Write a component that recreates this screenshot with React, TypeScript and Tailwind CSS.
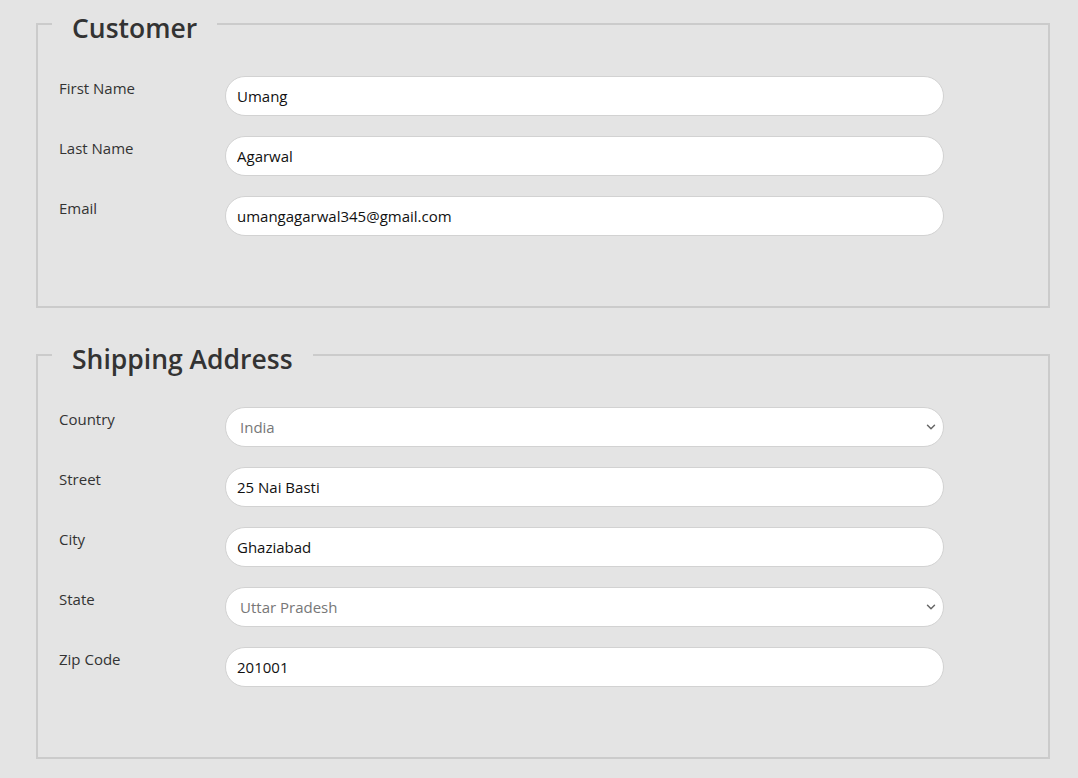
import React from 'react';
import { ChevronDown } from 'lucide-react';

interface FieldProps {
  label: string;
  value: string;
  select?: boolean;
}

const Field: React.FC<FieldProps> = ({ label, value, select }) => {
  return (
    <div className="flex items-start">
      <label className="w-[166px] pt-[1px] text-[15px] leading-[22px] text-[#333]">{label}</label>
      {select ? (
        <div className="relative w-[719px]">
          <select
            defaultValue={value}
            className="h-10 w-full appearance-none rounded-full border border-[#d2d2d2] bg-white pl-[14px] pr-8 text-[15px] text-[#777] outline-none"
          >
            <option>{value}</option>
          </select>
          <ChevronDown
            size={14}
            strokeWidth={2.5}
            className="pointer-events-none absolute right-[6px] top-[13px] text-[#666]"
          />
        </div>
      ) : (
        <input
          defaultValue={value}
          className="h-10 w-[719px] rounded-full border border-[#d2d2d2] bg-white px-[11px] text-[15px] text-[#111] outline-none"
        />
      )}
    </div>
  );
};

interface SectionProps {
  title: string;
  fields: FieldProps[];
}

const Section: React.FC<SectionProps> = ({ title, fields }) => {
  return (
    <fieldset className="w-[1014px] border-2 border-[#cbcbcb]">
      <legend className="ml-[14px] px-5 pt-2 text-[26.5px] font-semibold leading-[32px] text-[#333]">
        {title}
      </legend>
      <div className="flex flex-col gap-5 pl-[21px] pt-[32px] pb-[70px]">
        {fields.map((f) => (
          <Field key={f.label} {...f} />
        ))}
      </div>
    </fieldset>
  );
};

export default function App() {
  return (
    <div
      className="min-h-screen bg-[#e4e4e4] pl-[36px] pt-[4px]"
      style={{ fontFamily: '"Open Sans", "Noto Sans", sans-serif' }}
    >
      <div className="flex flex-col gap-[27px]">
        <Section
          title="Customer"
          fields={[
            { label: 'First Name', value: 'Umang' },
            { label: 'Last Name', value: 'Agarwal' },
            { label: 'Email', value: 'umangagarwal345@gmail.com' },
          ]}
        />
        <Section
          title="Shipping Address"
          fields={[
            { label: 'Country', value: 'India', select: true },
            { label: 'Street', value: '25 Nai Basti' },
            { label: 'City', value: 'Ghaziabad' },
            { label: 'State', value: 'Uttar Pradesh', select: true },
            { label: 'Zip Code', value: '201001' },
          ]}
        />
      </div>
    </div>
  );
}
